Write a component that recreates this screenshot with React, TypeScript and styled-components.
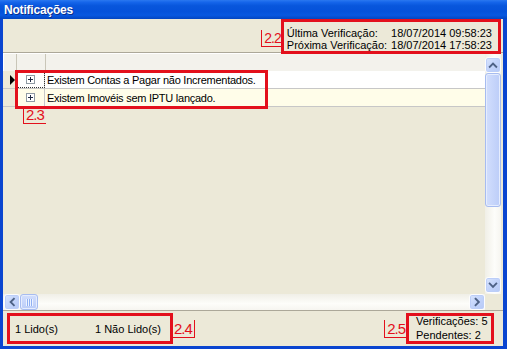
import styled, { createGlobalStyle } from "styled-components";

const GlobalStyle = createGlobalStyle`
  html, body {
    margin: 0;
    padding: 0;
    background: #ffffff;
  }
  body {
    font-family: "Liberation Sans", Arial, sans-serif;
    font-size: 11px;
    color: #000;
  }
`;

const RED = "#e3101c";

const Window = styled.div`
  width: 507px;
  height: 349px;
  display: flex;
  flex-direction: column;
  background: #0a45d0;
  overflow: hidden;
`;

const TitleBar = styled.div`
  height: 19px;
  flex: none;
  display: flex;
  align-items: center;
  padding-left: 4px;
  background: linear-gradient(
    to bottom,
    #2a78f0 0%,
    #1565ea 12%,
    #0856dc 30%,
    #0552da 60%,
    #0858e0 80%,
    #0345c0 100%
  );
  color: #ffffff;
  font-weight: bold;
  font-size: 12px;
  letter-spacing: -0.2px;
  text-shadow: 1px 1px 0 #0b2f8a;
`;

const Frame = styled.div`
  flex: 1;
  min-height: 0;
  display: flex;
  flex-direction: column;
  margin: 0 4px 3px 3px;
  background: #ece9d8;
`;

const TopPanel = styled.div`
  height: 33px;
  flex: none;
  display: flex;
  justify-content: flex-end;
  align-items: flex-start;
  border-bottom: 1px solid #aca899;
  position: relative;
  z-index: 2;
`;

const RedBox = styled.div`
  position: relative;
  box-sizing: border-box;
  border: 3px solid ${RED};
`;

const VerifyBox = styled(RedBox)`
  height: 35px;
  margin-right: 2px;
  padding: 5px 6px 0 3px;
  display: grid;
  grid-template-columns: auto auto;
  column-gap: 4px;
  line-height: 12px;
  white-space: nowrap;
`;

const Tag = styled.span<{ $line: "left" | "right"; $size?: number }>`
  position: absolute;
  font-family: "Liberation Sans", Arial, sans-serif;
  font-size: ${(p) => p.$size ?? 15}px;
  letter-spacing: -1px;
  line-height: 1;
  color: ${RED};
  padding: 1px 2px 1px 2px;
  border-bottom: 1px solid ${RED};
  ${(p) =>
    p.$line === "left"
      ? `border-left: 1px solid ${RED};`
      : `border-right: 1px solid ${RED};`}
  white-space: nowrap;
`;

const TagLeftOf = styled(Tag)`
  right: calc(100% + 1px);
  top: 8px;
`;

const TagBelow = styled(Tag)`
  left: 5px;
  top: calc(100% + 0px);
`;

const TagRightOf = styled(Tag)`
  left: calc(100% + 2px);
  top: 4px;
`;

const DataGrid = styled.div`
  flex: 1;
  min-height: 0;
  display: grid;
  grid-template-columns: 1fr 16px;
  grid-template-rows: 1fr 16px;
  padding-right: 2px;
`;

const GridBody = styled.div`
  display: flex;
  flex-direction: column;
  min-height: 0;
  background: #ece9d8;
`;

const HeaderRow = styled.div`
  height: 17px;
  flex: none;
  display: grid;
  grid-template-columns: 13px 29px 1fr;
  background: #f3f2ec;
  border-top: 1px solid #ffffff;
  border-left: 1px solid #ffffff;
`;

const HeaderCell = styled.div<{ $last?: boolean }>`
  border-right: ${(p) => (p.$last ? "none" : "1px solid #c9c6b8")};
`;

const Rows = styled.div`
  position: relative;
`;

const Row = styled.div<{ $alt?: boolean }>`
  height: 18px;
  display: grid;
  grid-template-columns: 13px 29px 1fr;
  background: ${(p) => (p.$alt ? "#fffde9" : "#ffffff")};
  border-bottom: 1px solid #c7c7c7;
  box-sizing: border-box;
`;

const IndicatorCell = styled.div`
  background: #ece9d8;
  display: flex;
  align-items: center;
  justify-content: flex-end;
  padding-right: 1px;
`;

const Arrow = styled.span`
  width: 0;
  height: 0;
  border-top: 5px solid transparent;
  border-bottom: 5px solid transparent;
  border-left: 5px solid #000000;
`;

const ExpandCell = styled.div<{ $focus?: boolean }>`
  display: flex;
  align-items: center;
  justify-content: center;
  border-right: 1px solid #c7c7c7;
  outline: ${(p) => (p.$focus ? "1px dotted #333" : "none")};
  outline-offset: -1px;
`;

const PlusBox = styled.span`
  box-sizing: border-box;
  width: 9px;
  height: 9px;
  border: 1px solid #8f9aa3;
  background: #ffffff;
  position: relative;

  &::before,
  &::after {
    content: "";
    position: absolute;
    background: #1f2a44;
  }
  &::before {
    left: 1px;
    right: 1px;
    top: 3px;
    height: 1px;
  }
  &::after {
    top: 1px;
    bottom: 1px;
    left: 3px;
    width: 1px;
  }
`;

const TextCell = styled.div`
  padding-left: 2px;
  display: flex;
  align-items: center;
  white-space: nowrap;
  letter-spacing: -0.25px;
`;

const RowHighlight = styled(RedBox)`
  position: absolute;
  left: 12px;
  top: -1px;
  width: 253px;
  height: 39px;
`;

const VScroll = styled.div`
  display: flex;
  flex-direction: column;
  padding-top: 4px;
  padding-bottom: 1px;
  background: linear-gradient(to right, #f0efe7, #fdfdfa 60%, #f6f5f0);
`;

const HScroll = styled.div`
  display: flex;
  align-items: stretch;
  padding-left: 1px;
  background: linear-gradient(to bottom, #f0efe7, #fdfdfa 60%, #f6f5f0);
`;

const Corner = styled.div`
  background: #ece9d8;
`;

const ScrollButton = styled.div`
  flex: none;
  width: 16px;
  height: 16px;
  box-sizing: border-box;
  border: 1px solid #fdfdfd;
  border-radius: 3px;
  background: linear-gradient(135deg, #dbe6fd 0%, #c4d5fb 45%, #b6c9f6 100%);
  box-shadow: inset 0 0 0 1px #bccef8;
  display: flex;
  align-items: center;
  justify-content: center;
`;

const ScrollThumb = styled.div<{ $horizontal?: boolean }>`
  flex: none;
  box-sizing: border-box;
  border: 1px solid #a7bcf0;
  border-radius: 3px;
  background: ${(p) =>
    p.$horizontal
      ? "linear-gradient(to bottom, #d2defd, #bccdf8)"
      : "linear-gradient(to right, #d2defd, #bccdf8)"};
  box-shadow: inset 0 0 0 1px #e6edfe;
  display: flex;
  align-items: center;
  justify-content: center;
`;

const Grip = styled.span`
  width: 7px;
  height: 7px;
  background: repeating-linear-gradient(
    to right,
    #eef3ff 0 1px,
    #8fb0f3 1px 2px
  );
`;

const Track = styled.div`
  flex: 1;
`;

const StatusBar = styled.div`
  height: 35px;
  flex: none;
  display: flex;
  align-items: center;
  justify-content: space-between;
  padding: 0 9px 0 4px;
  border-top: 1px solid #aca899;
`;

const ReadBox = styled(RedBox)`
  width: 166px;
  height: 31px;
  display: flex;
  align-items: center;
  padding-left: 5px;
  white-space: nowrap;
`;

const ReadItem = styled.span<{ $width?: number }>`
  width: ${(p) => (p.$width ? `${p.$width}px` : "auto")};
`;

const CountBox = styled(RedBox)`
  width: 88px;
  height: 31px;
  padding: 0 0 0 7px;
  display: flex;
  flex-direction: column;
  justify-content: center;
  line-height: 13.5px;
  white-space: nowrap;
`;

const TagStatusLeft = styled(Tag)`
  right: calc(100% + 2px);
  top: 4px;
`;

type Dir = "up" | "down" | "left" | "right";

const chevrons: Record<Dir, string> = {
  up: "M4 9.5 L7.5 6 L11 9.5",
  down: "M4 6 L7.5 9.5 L11 6",
  left: "M9.5 4 L6 7.5 L9.5 11",
  right: "M6 4 L9.5 7.5 L6 11",
};

function Chevron({ dir }: { dir: Dir }) {
  return (
    <svg width="14" height="14" viewBox="0 0 15 15">
      <path
        d={chevrons[dir]}
        fill="none"
        stroke="#4d6185"
        strokeWidth="2"
        strokeLinecap="square"
      />
    </svg>
  );
}

const notifications = [
  { text: "Existem Contas a Pagar não Incrementados.", current: true },
  { text: "Existem Imovéis sem IPTU lançado.", current: false },
];

export default function App() {
  return (
    <>
      <GlobalStyle />
      <Window>
        <TitleBar>Notificações</TitleBar>
        <Frame>
          <TopPanel>
            <VerifyBox>
              <TagLeftOf $line="left" $size={14}>
                2.2
              </TagLeftOf>
              <span>Última Verificação:</span>
              <span>18/07/2014 09:58:23</span>
              <span>Próxima Verificação:</span>
              <span>18/07/2014 17:58:23</span>
            </VerifyBox>
          </TopPanel>

          <DataGrid>
            <GridBody>
              <HeaderRow>
                <HeaderCell />
                <HeaderCell />
                <HeaderCell $last />
              </HeaderRow>
              <Rows>
                {notifications.map((item, i) => (
                  <Row key={item.text} $alt={i % 2 === 1}>
                    <IndicatorCell>{item.current && <Arrow />}</IndicatorCell>
                    <ExpandCell $focus={item.current}>
                      <PlusBox />
                    </ExpandCell>
                    <TextCell>{item.text}</TextCell>
                  </Row>
                ))}
                <RowHighlight>
                  <TagBelow $line="left">2.3</TagBelow>
                </RowHighlight>
              </Rows>
            </GridBody>

            <VScroll>
              <ScrollButton>
                <Chevron dir="up" />
              </ScrollButton>
              <ScrollThumb style={{ height: 134 }} />
              <Track />
              <ScrollButton>
                <Chevron dir="down" />
              </ScrollButton>
            </VScroll>

            <HScroll>
              <ScrollButton>
                <Chevron dir="left" />
              </ScrollButton>
              <ScrollThumb $horizontal style={{ width: 18 }}>
                <Grip />
              </ScrollThumb>
              <Track />
              <ScrollButton>
                <Chevron dir="right" />
              </ScrollButton>
            </HScroll>
            <Corner />
          </DataGrid>

          <StatusBar>
            <ReadBox>
              <ReadItem $width={80}>1 Lido(s)</ReadItem>
              <ReadItem>1 Não Lido(s)</ReadItem>
              <TagRightOf $line="right">2.4</TagRightOf>
            </ReadBox>
            <CountBox>
              <TagStatusLeft $line="left">2.5</TagStatusLeft>
              <span>Verificações: 5</span>
              <span>Pendentes: 2</span>
            </CountBox>
          </StatusBar>
        </Frame>
      </Window>
    </>
  );
}
